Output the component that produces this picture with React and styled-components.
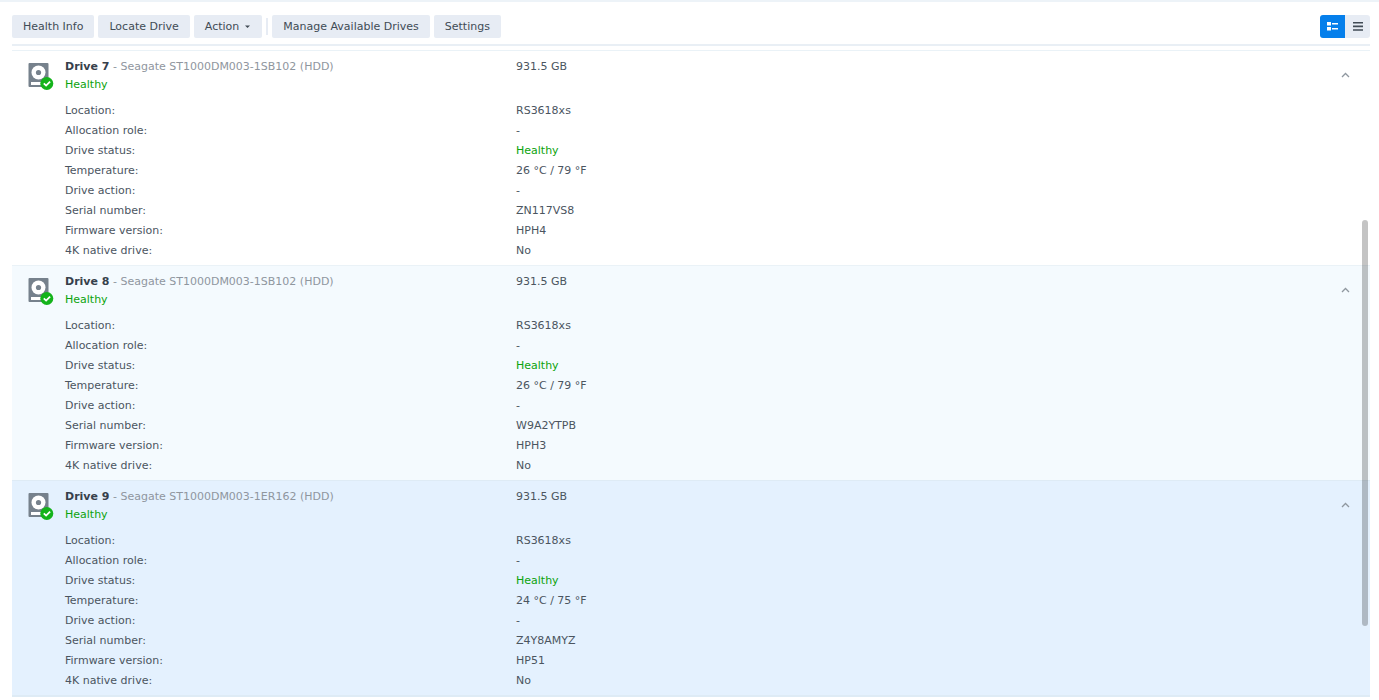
import React, { useState } from 'react';
import styled, { createGlobalStyle, css } from 'styled-components';

const GlobalStyle = createGlobalStyle`
	* {
		box-sizing: border-box;
	}
	body {
		margin: 0;
		background-color: #fff;
		color: #4b555f;
		font-family: Verdana, 'DejaVu Sans', sans-serif;
		font-size: 11px;
		line-height: 18px;
	}
`;
const Page = styled.main`
	display: flex;
	flex-direction: column;
	height: 100vh;
	padding: 1px 9px 3px 12px;
	overflow: hidden;
	box-shadow: inset 0 2px 0 #edf3f8, inset 0 1px 0 #fff;
`;
const Toolbar = styled.div`
	display: flex;
	flex: none;
	align-items: center;
	gap: 4px;
	height: 45px;
	padding: 8px 0 0;
	border-bottom: 2px solid #e9eff5;
`;
const Button = styled.button`
	display: flex;
	align-items: center;
	justify-content: center;
	gap: 5px;
	height: 23px;
	padding: 0 11px;
	border: 0;
	border-radius: 2px;
	background-color: #e7ecf4;
	color: #414b55;
	font: inherit;
	white-space: nowrap;
	cursor: pointer;
`;
const Divider = styled.span`
	width: 2px;
	height: 17px;
	background-color: #e7ecf4;
`;
const ViewSwitch = styled.div`
	display: flex;
	margin-left: auto;
	border-radius: 3px;
	overflow: hidden;
`;
const ViewButton = styled(Button)`
	width: 25px;
	padding: 0;
	border-radius: 0;
	${props =>
		props.$active &&
		css`
			background-color: #057feb;
			color: #fff;
		`}
`;
const ListArea = styled.div`
	position: relative;
	flex: 1;
	min-height: 0;
	margin-top: 4px;
`;
const List = styled.div`
	height: 100%;
	overflow-y: auto;
	scrollbar-width: none;
`;
const ScrollThumb = styled.div`
	position: absolute;
	top: 170px;
	right: 2px;
	bottom: 71px;
	width: 6px;
	border-radius: 3px;
	background-color: rgba(0, 0, 0, 0.23);
`;
const backgrounds = { normal: '#fff', striped: '#f4fafe', selected: '#e4f1fe' };
const Drive = styled.section`
	display: flex;
	padding: 7px 20px 4px 16px;
	border-top: 1px solid ${props => (props.$tone === 'selected' ? '#deebf5' : '#eaf2f7')};
	background-color: ${props => backgrounds[props.$tone]};

	&:last-child {
		border-bottom: 2px solid #deebf5;
	}
`;
const IconCell = styled.div`
	flex: none;
	width: 37px;
	padding-top: 4px;
`;
const Content = styled.div`
	flex: 1;
	min-width: 0;
`;
const Header = styled.header`
	display: flex;
	margin-bottom: 7px;
`;
const Heading = styled.div`
	width: 451px;
`;
const Title = styled.h2`
	margin: 0;
	font-size: 11px;
	font-weight: normal;
	color: #8f969e;
	white-space: nowrap;
`;
const Name = styled.strong`
	color: #36404b;
`;
const Healthy = styled.span`
	color: #0ca30c;
`;
const Toggle = styled.button`
	display: flex;
	align-self: flex-start;
	margin: 12px 0 0 auto;
	padding: 2px 0;
	border: 0;
	background: none;
	color: #8f979f;
	cursor: pointer;
`;
const Details = styled.table`
	width: 100%;
	table-layout: fixed;
	border-collapse: collapse;
`;
const Label = styled.th`
	width: 451px;
	height: 20px;
	padding: 0;
	font-weight: normal;
	text-align: left;
`;
const Value = styled.td`
	height: 20px;
	padding: 0;
`;

const drives = [
	{ id: 7, model: 'Seagate ST1000DM003-1SB102 (HDD)', temp: '26 °C / 79 °F', serial: 'ZN117VS8', firmware: 'HPH4', tone: 'normal' },
	{ id: 8, model: 'Seagate ST1000DM003-1SB102 (HDD)', temp: '26 °C / 79 °F', serial: 'W9A2YTPB', firmware: 'HPH3', tone: 'striped' },
	{ id: 9, model: 'Seagate ST1000DM003-1ER162 (HDD)', temp: '24 °C / 75 °F', serial: 'Z4Y8AMYZ', firmware: 'HP51', tone: 'selected' },
];

const DriveIcon = () => (
	<svg width="26" height="28" viewBox="0 0 26 28" aria-hidden="true">
		<path fill="#76818c" d="M1.5 1h18a1 1 0 0 1 1 1v22a1 1 0 0 1-1 1h-18a1 1 0 0 1-1-1V2a1 1 0 0 1 1-1z" />
		<path fill="#fff" d="M3 20h15v3H3z" />
		<circle cx="10.5" cy="10.5" r="7" fill="#fff" />
		<circle cx="10.5" cy="10.5" r="2.6" fill="#76818c" />
		<circle cx="18.8" cy="21.5" r="6.5" fill="#14b31b" />
		<path d="M15.8 21.4l2.3 2.2 4-4" fill="none" stroke="#fff" strokeWidth="1.8" />
	</svg>
);

const DriveRow = ({ drive }) => {
	const [open, setOpen] = useState(true);
	const rows = [
		['Location:', 'RS3618xs'],
		['Allocation role:', '-'],
		['Drive status:', <Healthy>Healthy</Healthy>],
		['Temperature:', drive.temp],
		['Drive action:', '-'],
		['Serial number:', drive.serial],
		['Firmware version:', drive.firmware],
		['4K native drive:', 'No'],
	];
	return (
		<Drive $tone={drive.tone}>
			<IconCell>
				<DriveIcon />
			</IconCell>
			<Content>
				<Header>
					<Heading>
						<Title>
							<Name>Drive {drive.id}</Name> - {drive.model}
						</Title>
						<Healthy>Healthy</Healthy>
					</Heading>
					<span>931.5 GB</span>
					<Toggle
						type="button"
						aria-label={`Toggle Drive ${drive.id}`}
						aria-expanded={open}
						onClick={() => setOpen(!open)}
					>
						<svg width="9" height="6" viewBox="0 0 9 6">
							<path d="M1 5l3.5-3.5L8 5" fill="none" stroke="currentColor" strokeWidth="1.3" />
						</svg>
					</Toggle>
				</Header>
				{open && (
					<Details>
						<tbody>
							{rows.map(([label, value]) => (
								<tr key={label}>
									<Label scope="row">{label}</Label>
									<Value>{value}</Value>
								</tr>
							))}
						</tbody>
					</Details>
				)}
			</Content>
		</Drive>
	);
};

const App = () => (
	<>
		<GlobalStyle />
		<Page>
			<Toolbar>
				<Button type="button">Health Info</Button>
				<Button type="button">Locate Drive</Button>
				<Button type="button">
					Action
					<svg width="7" height="4" viewBox="0 0 7 4" aria-hidden="true">
						<path d="M1 .5h5L3.5 3z" fill="currentColor" />
					</svg>
				</Button>
				<Divider />
				<Button type="button">Manage Available Drives</Button>
				<Button type="button">Settings</Button>
				<ViewSwitch>
					<ViewButton type="button" $active aria-label="Detailed view">
						<svg width="11" height="9" viewBox="0 0 11 9" fill="currentColor">
							<path d="M0 0h4v3.5H0zM5 1h6v1.6H5zM0 5h4v3.5H0zM5 6h6v1.6H5z" />
						</svg>
					</ViewButton>
					<ViewButton type="button" aria-label="List view">
						<svg width="10" height="9" viewBox="0 0 10 9" fill="currentColor">
							<path d="M0 0h10v1.6H0zM0 3.6h10v1.6H0zM0 7.2h10v1.6H0z" />
						</svg>
					</ViewButton>
				</ViewSwitch>
			</Toolbar>
			<ListArea>
				<List>
					{drives.map(drive => (
						<DriveRow key={drive.id} drive={drive} />
					))}
				</List>
				<ScrollThumb />
			</ListArea>
		</Page>
	</>
);

export default App;
